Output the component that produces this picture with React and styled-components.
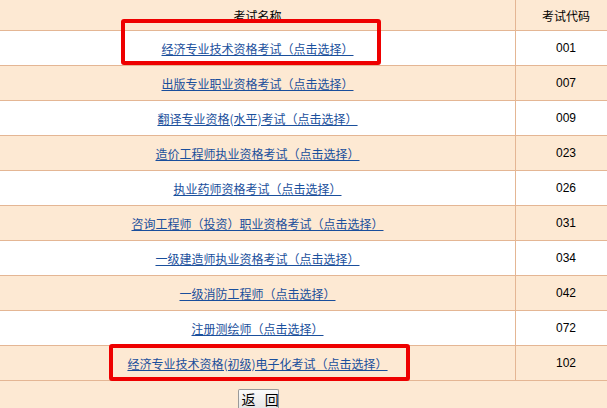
import React from 'react';
import styled, { createGlobalStyle } from 'styled-components';

const GlobalStyle = createGlobalStyle`
  html, body {
    margin: 0;
    padding: 0;
    background: #fde9d3;
    overflow: hidden;
  }
`;

const Page = styled.div`
  position: relative;
  width: 616px;
  height: 408px;
  background: #fde9d3;
  font-family: "Noto Sans CJK SC", "DejaVu Sans", sans-serif;
  font-size: 12px;
  color: #000;
`;

const Table = styled.div`
  display: grid;
  grid-template-columns: 516px 100px;
`;

const HeadCell = styled.div`
  height: 30px;
  display: flex;
  align-items: center;
  justify-content: center;
  background: #fde9d3;
  border-bottom: 1px solid #e4b694;
  border-right: ${(p) => (p.$last ? 'none' : '1px solid #e4b694')};
  width: ${(p) => (p.$last ? '100px' : '515px')};
`;

const Cell = styled.div`
  height: 34px;
  display: flex;
  align-items: center;
  justify-content: center;
  background: ${(p) => (p.$alt ? '#fde9d3' : '#ffffff')};
  border-bottom: 1px solid #e4b694;
  border-right: ${(p) => (p.$last ? 'none' : '1px solid #e4b694')};
  width: ${(p) => (p.$last ? '100px' : '515px')};
`;

const ExamLink = styled.a`
  color: #1a4f9c;
  text-decoration: underline;
  font-size: 12px;
  cursor: pointer;
`;

const Code = styled.span`
  font-family: "Liberation Sans", Arial, sans-serif;
  font-size: 12px;
`;

const Footer = styled.div`
  width: 516px;
  display: flex;
  justify-content: center;
  padding-top: 8px;
`;

const BackButton = styled.button`
  width: 41px;
  height: 19px;
  padding: 0 0 0 3px;
  font-family: "Noto Sans CJK SC", sans-serif;
  font-size: 14px;
  line-height: 17px;
  letter-spacing: 3px;
  color: #000;
  white-space: pre;
  background: linear-gradient(#fafafa, #e6e6e6);
  border: 1px solid #9a9a9a;
  border-bottom: none;
  border-radius: 2px 2px 0 0;
`;

const Mark = styled.div`
  position: absolute;
  border: 4px solid #ee0000;
  border-radius: 3px;
  box-sizing: border-box;
  pointer-events: none;
`;

const exams = [
  ['经济专业技术资格考试（点击选择）', '001'],
  ['出版专业职业资格考试（点击选择）', '007'],
  ['翻译专业资格(水平)考试（点击选择）', '009'],
  ['造价工程师执业资格考试（点击选择）', '023'],
  ['执业药师资格考试（点击选择）', '026'],
  ['咨询工程师（投资）职业资格考试（点击选择）', '031'],
  ['一级建造师执业资格考试（点击选择）', '034'],
  ['一级消防工程师（点击选择）', '042'],
  ['注册测绘师（点击选择）', '072'],
  ['经济专业技术资格(初级)电子化考试（点击选择）', '102'],
];

export default function App() {
  return (
    <Page>
      <GlobalStyle />
      <Table>
        <HeadCell>考试名称</HeadCell>
        <HeadCell $last>考试代码</HeadCell>
        {exams.map(([name, code], i) => (
          <React.Fragment key={code}>
            <Cell $alt={i % 2 === 1}>
              <ExamLink>{name}</ExamLink>
            </Cell>
            <Cell $alt={i % 2 === 1} $last>
              <Code>{code}</Code>
            </Cell>
          </React.Fragment>
        ))}
      </Table>
      <Footer>
        <BackButton>{'返 回'}</BackButton>
      </Footer>
      <Mark style={{ left: 121, top: 19, width: 260, height: 46 }} />
      <Mark style={{ left: 109, top: 344, width: 301, height: 37 }} />
    </Page>
  );
}
